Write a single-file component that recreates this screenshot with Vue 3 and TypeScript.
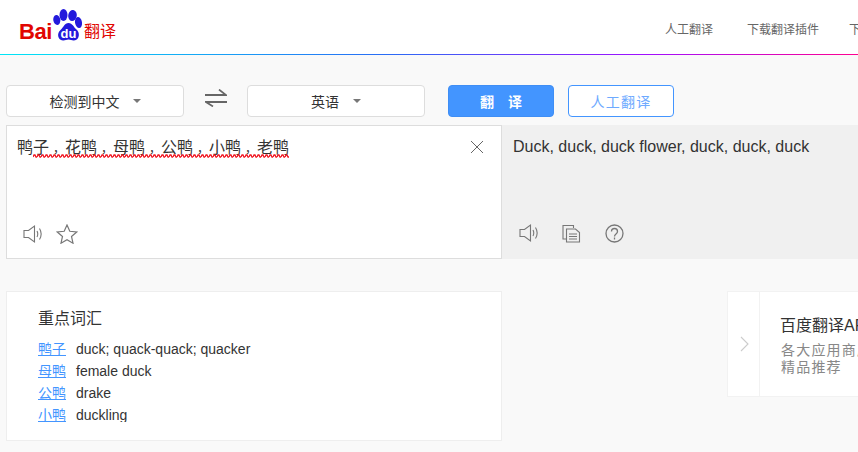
<script setup lang="ts">
const sourceWords = ['鸭子', '花鸭', '母鸭', '公鸭', '小鸭', '老鸭']
const vocabulary = [
  { word: '鸭子', meaning: 'duck; quack-quack; quacker' },
  { word: '母鸭', meaning: 'female duck' },
  { word: '公鸭', meaning: 'drake' },
  { word: '小鸭', meaning: 'duckling' },
]
</script>

<template>
  <div class="page">
    <header class="topbar">
      <div class="logo">
        <span class="logo-bai">Bai</span>
        <span class="paw">
          <svg width="30" height="33" viewBox="0 0 30 33">
            <ellipse cx="3.800" cy="12" rx="3.500" ry="5" transform="rotate(-8 3.800 12)" fill="#2319dc" />
            <ellipse cx="10.500" cy="7" rx="4" ry="6" fill="#2319dc" />
            <ellipse cx="19.500" cy="7.500" rx="4.300" ry="5.500" transform="rotate(8 19.500 7.500)" fill="#2319dc" />
            <ellipse cx="25.500" cy="14.500" rx="3.500" ry="5.500" transform="rotate(-10 25.500 14.500)" fill="#2319dc" />
            <path d="M15.500 15c4 0 5 4 8 6.500 3.500 2.800 3.500 10.500-2.500 11-2 .2-3.500-.9-5.500-.9s-3.500 1.100-5.500.9c-6-.5-6-8-2.500-10.500 3-2.500 4-7 8-7z" fill="#2319dc" />
          </svg>
          <span class="paw-du">du</span>
        </span>
        <span class="logo-cn">翻译</span>
      </div>
      <nav class="nav">
        <span class="nav-first">人工翻译</span>
        <span>下载翻译插件</span>
        <span>下载翻译APP</span>
      </nav>
    </header>
    <div class="rainbow"></div>

    <section class="toolbar">
      <div class="select">
        <span>检测到中文</span><i class="caret"></i>
      </div>
      <div class="swap">
        <svg width="22" height="18" viewBox="0 0 22 18" fill="none" stroke="#666" stroke-width="1.800">
          <path d="M0 6h21L14 .6" />
          <path d="M22 13H1l7 4.400" />
        </svg>
      </div>
      <div class="select select-target">
        <span>英语</span><i class="caret"></i>
      </div>
      <button class="btn btn-primary">翻 译</button>
      <button class="btn btn-outline">人工翻译</button>
    </section>

    <section class="panes">
      <div class="pane-input">
        <div class="source">
          <template v-for="(w, i) in sourceWords" :key="w">
            <span>{{ w }}</span><span v-if="i < sourceWords.length - 1" class="comma">，</span>
          </template>
          <svg class="squiggle" width="256" height="4" viewBox="0 0 256 4">
            <defs>
              <pattern id="wave" width="4" height="4" patternUnits="userSpaceOnUse">
                <path d="M0 3 L1 1 L2 1 L3 3 L4 3" fill="none" stroke="#f0141e" stroke-width="1.300" />
              </pattern>
            </defs>
            <rect width="256" height="4" fill="url(#wave)" />
          </svg>
        </div>
        <svg class="close" width="14" height="14" viewBox="0 0 14 14" stroke="#666" stroke-width="1">
          <path d="M1 1l12 12M13 1L1 13" />
        </svg>
        <div class="actions">
          <svg width="20" height="20" viewBox="0 0 20 20" fill="none" stroke="#777" stroke-width="1.100">
            <path d="M1 6.500h4.500L11.500 2v16L5.500 13.500H1z" />
            <path d="M14 7c1 2 1 4 0 6M16.500 4.500c2 3.300 2 7.700 0 11" />
          </svg>
          <svg class="star" width="22" height="20" viewBox="0 0 22 20" fill="none" stroke="#777" stroke-width="1.200">
            <path d="M11 1l2.800 6.300 6.900.7-5.200 4.500 1.500 6.700L11 15.700l-6 3.500 1.500-6.700L1.300 8l6.900-.7z" />
          </svg>
        </div>
      </div>
      <div class="pane-output">
        <div class="result">Duck, duck, duck flower, duck, duck, duck</div>
        <div class="actions actions-output">
          <svg class="speaker-out" width="20" height="20" viewBox="0 0 20 20" fill="none" stroke="#777" stroke-width="1.100">
            <path d="M1 6.500h4.500L11.500 2v16L5.500 13.500H1z" />
            <path d="M14 7c1 2 1 4 0 6M16.500 4.500c2 3.300 2 7.700 0 11" />
          </svg>
          <svg width="19" height="19" viewBox="0 0 19 19" fill="none" stroke="#777" stroke-width="1.100">
            <path d="M11.500 4V1.500H1v13.500h3.500" />
            <path d="M4.500 5h9l4 3.500v9.500h-13z" />
            <path d="M7 10h8M7 12.500h8M7 15h8" />
          </svg>
          <svg width="19" height="19" viewBox="0 0 19 19" fill="none" stroke="#777" stroke-width="1.300">
            <circle cx="9.500" cy="9.500" r="8.500" />
            <path d="M6.500 7.500c0-4 6-4 6 0 0 2.500-3 2.500-3 5" />
            <path d="M9.500 13.500v2" />
          </svg>
        </div>
      </div>
    </section>

    <section class="lower">
      <div class="vocab">
        <h3 class="vocab-title">重点词汇</h3>
        <ul class="vocab-list">
          <li v-for="v in vocabulary" :key="v.word">
            <a class="vocab-word">{{ v.word }}</a>
            <span class="vocab-meaning">{{ v.meaning }}</span>
          </li>
        </ul>
      </div>
      <aside class="promo">
        <div class="promo-arrow">
          <svg width="9" height="16" viewBox="0 0 9 16" fill="none" stroke="#ccc" stroke-width="1.100">
            <path d="M1 1l7 7-7 7" />
          </svg>
        </div>
        <div class="promo-body">
          <div class="promo-title">百度翻译API</div>
          <div class="promo-text">各大应用商店<br />精品推荐</div>
        </div>
      </aside>
    </section>
  </div>
</template>

<style>
html, body { margin: 0; background: #f9f9f9; overflow: hidden; }
</style>

<style scoped>
.page {
  width: 858px;
  height: 452px;
  overflow: hidden;
  background: #f9f9f9;
  font-family: "Liberation Sans", "Noto Sans CJK SC", sans-serif;
  color: #333;
}
.topbar {
  height: 54px;
  background: #fff;
  display: flex;
  justify-content: space-between;
  align-items: center;
  overflow: hidden;
}
.logo {
  display: flex;
  align-items: flex-start;
  margin-left: 19px;
  height: 54px;
  flex: none;
}
.logo-bai {
  font-size: 22px;
  font-weight: 700;
  color: #e10601;
  line-height: 24px;
  margin-top: 20px;
  letter-spacing: -0.4px;
}
.paw {
  position: relative;
  width: 30px;
  height: 33px;
  margin-top: 8px;
  margin-left: 1px;
  flex: none;
}
.paw svg { display: block; }
.paw-du {
  position: absolute;
  left: 6px;
  top: 19px;
  width: 19px;
  text-align: center;
  font-size: 13px;
  line-height: 14px;
  font-weight: 700;
  color: #fff;
}
.logo-cn {
  font-size: 16px;
  line-height: 20px;
  color: #e10601;
  margin-top: 22px;
  margin-left: 1px;
}
.nav {
  display: flex;
  gap: 30px;
  flex: none;
  width: 193px;
  font-size: 12px;
  color: #666;
  white-space: nowrap;
  overflow: hidden;
  line-height: 16px;
  margin-top: 6px;
}
.nav-first { margin-right: 4px; }
.rainbow {
  height: 1px;
  background: linear-gradient(90deg, #00e6f6 0%, #2a6cf5 45%, #a010ff 75%, #ff0090 100%);
}
.toolbar {
  display: flex;
  align-items: stretch;
  height: 32px;
  margin: 30px 0 8px 6px;
}
.select {
  box-sizing: border-box;
  width: 178px;
  display: flex;
  justify-content: center;
  align-items: center;
  gap: 13px;
  background: #fff;
  border: 1px solid #ddd;
  border-radius: 4px;
  font-size: 14px;
  color: #333;
}
.caret {
  width: 0;
  height: 0;
  border-left: 4px solid transparent;
  border-right: 4px solid transparent;
  border-top: 4px solid #777;
}
.swap {
  width: 63px;
  display: flex;
  justify-content: center;
  align-items: center;
  padding-bottom: 6px;
  box-sizing: border-box;
}
.select-target { margin-right: 23px; gap: 14px; }
.btn {
  box-sizing: border-box;
  width: 106px;
  border-radius: 4px;
  font: inherit;
  font-size: 14px;
  padding: 0;
}
.btn-primary {
  background: #4395ff;
  border: 1px solid #3f8ef5;
  color: #fff;
  margin-right: 14px;
  font-weight: 700;
  word-spacing: 10px;
}
.btn-outline {
  background: #fff;
  border: 1px solid #4395ff;
  color: #6eaaff;
  letter-spacing: 1.300px;
}
.panes {
  display: flex;
  height: 134px;
  margin-left: 6px;
}
.pane-input {
  position: relative;
  box-sizing: border-box;
  width: 496px;
  background: #fff;
  border: 1px solid #ddd;
  padding: 11px 10px;
}
.source {
  position: relative;
  font-size: 16px;
  line-height: 22px;
  color: #333;
  white-space: nowrap;
}
.comma {
  display: inline-block;
  box-sizing: border-box;
  width: 16px;
  padding-left: 4px;
  font-size: 12px;
}
.squiggle {
  position: absolute;
  left: 16px;
  top: 17px;
}
.close {
  position: absolute;
  right: 17px;
  top: 14px;
}
.actions {
  position: absolute;
  left: 16px;
  top: 98px;
  display: flex;
  align-items: center;
  gap: 14px;
}
.star { margin-left: -1px; }
.pane-output {
  position: relative;
  flex: 1;
  background: #f0f0f0;
  padding: 12px 11px;
}
.result {
  font-size: 16px;
  line-height: 20px;
  color: #333;
  white-space: nowrap;
}
.actions-output {
  left: 17px;
  top: 98px;
  gap: 24px;
}
.speaker-out { margin-right: -1px; }
.lower {
  display: flex;
  align-items: flex-start;
  margin: 32px 0 0 6px;
}
.vocab {
  box-sizing: border-box;
  width: 496px;
  height: 150px;
  background: #fff;
  border: 1px solid #eee;
  padding: 16px 31px 0;
  flex: none;
}
.vocab-title {
  margin: 0;
  font-size: 16px;
  font-weight: 400;
  line-height: 22px;
  color: #333;
}
.vocab-list {
  list-style: none;
  margin: 8px 0 0;
  padding: 0;
  height: 84px;
  overflow: hidden;
}
.vocab-list li {
  display: flex;
  gap: 10px;
  font-size: 14px;
  line-height: 22px;
}
.vocab-word {
  color: #4395ff;
  text-decoration: underline;
}
.vocab-meaning { color: #333; }
.promo {
  box-sizing: border-box;
  display: flex;
  flex: none;
  width: 300px;
  height: 106px;
  margin-left: 225px;
  background: #fff;
  border: 1px solid #f2f2f2;
}
.promo-arrow {
  width: 31px;
  border-right: 1px solid #f2f2f2;
  display: flex;
  align-items: center;
  justify-content: center;
  flex: none;
}
.promo-arrow svg { margin-left: 1px; }
.promo-body {
  padding: 23px 0 0 20px;
  white-space: nowrap;
}
.promo-title {
  font-size: 16px;
  line-height: 22px;
  color: #333;
}
.promo-text {
  margin-top: 5px;
  padding-left: 1px;
  font-size: 14px;
  line-height: 17px;
  letter-spacing: 1.200px;
  color: #888;
}
</style>
